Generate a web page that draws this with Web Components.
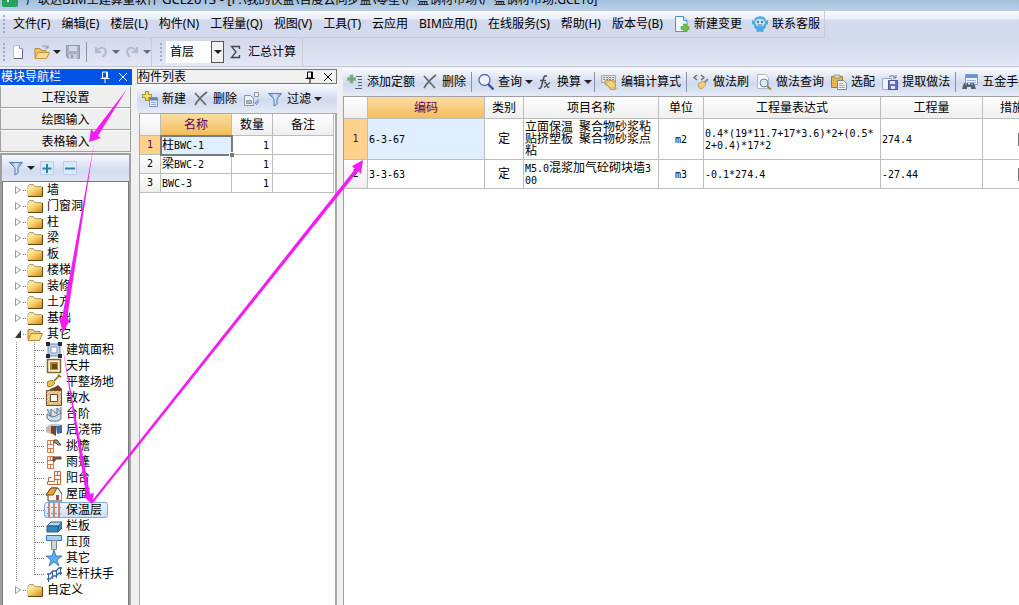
<!DOCTYPE html>
<html lang="zh-CN">
<head>
<meta charset="utf-8">
<title>广联达BIM土建算量软件 GCL2013</title>
<style>
html,body{height:100%;margin:0}
body{overflow:hidden;font:12px/16px "Noto Sans","Noto Sans CJK SC",sans-serif;color:#000;background:#f0f0f0}
</style>
</head>
<body>
<cost-app></cost-app>
<script>
const ICONS={
folder:'<path d="M1 4.5 2.5 2.500h4L8 4.500h6.500v9.500H1z" fill="#f3e2ae" stroke="#b8a06a"/><path d="M1 5h14v9H1z" fill="url(#g)"/><path d="M15.500 5v9.500H1" fill="none" stroke="#5d4715"/><defs><linearGradient id="g" x2="1" y2="1"><stop stop-color="#fff3b8"/><stop offset=".5" stop-color="#f3c860"/><stop offset="1" stop-color="#c98d1c"/></linearGradient></defs>',
open:'<path d="M1 13V3.500h5l1.500 2H13V13z" fill="#f0cf77" stroke="#a8803a"/><path d="m1 14.500 3-7h11.500l-3 7z" fill="#fbdc7e" stroke="#b48a35"/>',
openarrow:'<path d="M1 14V4.500h5l1.500 2H12V14z" fill="#eec069" stroke="#b98a3c"/><path d="m1 14.500 3-6h11.500l-3 6z" fill="#fbdd8f" stroke="#c49747"/><path d="M8 3q3-3 6 1m0-3v3h-3" fill="none" stroke="#7b98ad"/>',
newdoc:'<path d="M2.500 1.500h6l3 3v10h-9z" fill="#fff" stroke="#b4bfd2"/><path d="M8.500 1.500v3h3" fill="#dce6f5" stroke="#8496b3"/><path d="M3 14.500h8.500V5" fill="none" stroke="#5a6a88"/>',
save:'<path d="M1.500 1.500h13v13h-11l-2-2z" fill="#a9b1bf" stroke="#8f98a8"/><path d="M4 2h8v5H4z" fill="#d5dae5"/><path d="M4 10h8v5H4z" fill="#c7cdd9"/><path d="M6 11h2v3H6z" fill="#8f98a8"/>',
undo:'<path d="M3 3v5h5M3.500 7.500Q8 1.500 12 5q2.500 4-2.500 8" fill="none" stroke="#98a3be" stroke-width="2"/>',
redo:'<path d="M13 3v5H8M12.500 7.500Q8 1.500 4 5q-2.500 4 2 8" fill="none" stroke="#98a3be" stroke-width="2"/>',
change:'<path d="M1.500.5h8l3.500 4v11H1.500z" fill="#f3faff" stroke="#4c97c6"/><path d="M9.500.500v4H13" fill="#cfe6f6" stroke="#4c97c6"/><path d="M9.500 8h3v2.500H15v3h-2.500V16h-3v-2.500H7v-3h2.500z" fill="#73c043" stroke="#4d9a2a" stroke-width=".6"/>',
robot:'<path d="M3 2q5-3.500 10 0l1 3 2-1v4l-2 1q0 3-2 4l-1 3H9l-1-1-1 1H5l-1-3q-2-1-2-4L0 8V4l2 1z" fill="#4aaae6"/><ellipse cx="8" cy="6.500" rx="5" ry="3.800" fill="#bfe4f8"/><circle cx="6" cy="6" r=".9" fill="#234a68"/><circle cx="10" cy="6" r=".9" fill="#234a68"/><path d="M6 8.500q2 1.500 4 0" fill="none" stroke="#234a68" stroke-width=".7"/>',
add:'<path d="M7.500 6.500h8v9h-8z" fill="#e3ecf9" stroke="#7d93b8"/><path d="M8 7h7v2.500H8z" fill="#5f87c2"/><path d="M9 11.500h5M9 13.500h5" stroke="#91a9ce"/><path d="M3.500.500h3v3h3v3h-3v3h-3v-3h-3v-3h3z" fill="#f5df62" stroke="#a98f24"/>',
del:'<path d="m2 2 11 12M14 1Q7 6 2 14" fill="none" stroke="#686868" stroke-width="1.700"/>',
copy:'<path d="M.5 4.500h6l3 3v7h-9zM10.500 1.500h4v4h-4z" fill="#edf1f7" stroke="#8d96a6"/><path d="M2.500 9.500h5v3h-5z" fill="#b3bac8" stroke="#8d96a6"/><path d="M14 8v4h-3m2-2-2 2 2 2" fill="none" stroke="#7689c9"/>',
filter:'<path d="M1.500 2.500h13L10 8v5l-3 2V8z" fill="url(#f)" stroke="#527fbc"/><defs><linearGradient id="f"><stop stop-color="#5e91d4"/><stop offset=".5" stop-color="#d6e7fa"/><stop offset="1" stop-color="#6798d4"/></linearGradient></defs>',
plus:'<path d="M1.500 1.500h13v13h-13z" fill="#d9ebfa" stroke="#bfcbed"/><path d="M8 4v9M3.500 8.500h9" stroke="#2b82b6" stroke-width="2"/>',
minus:'<path d="M1.500 1.500h13v13h-13z" fill="#d9ebfa" stroke="#bfcbed"/><path d="M3 8.500h10" stroke="#2b82b6" stroke-width="2"/>',
quota:'<path d="M3 1h3v2.500h2.500v3H6V9H3V6.500H.500v-3H3z" fill="#71ad78" stroke="#8fb898" stroke-width=".7"/><path d="M9 2.500h6M11 5.500h4M11 8.500h4M11 11.500h4M8 14.500h7" stroke="#59626d"/>',
search:'<circle cx="6.500" cy="6" r="5.500" fill="#eef3ff" stroke="#5567a8" stroke-width="1.300"/><path d="m10 10 5.500 5.500" stroke="#3c4c96" stroke-width="2.400"/>',
fx:'<path d="M10 2.500Q7.500.500 6.500 4.500L4.500 12q-1 3.500-3 2M3 6.500h6" fill="none" stroke="#4b5159" stroke-width="1.500"/><path d="m7 9 1.500-.5 2.500 5 1.500-.5M13 8.500 7 13.500" fill="none" stroke="#4b5159" stroke-width="1.300"/>',
editcalc:'<path d="M.5 1.500h14v7h-14z" fill="#e6e6e6" stroke="#a5a5a5"/><path d="M2 3.500h11M2 5.500h11" stroke="#868686" stroke-dasharray="2 1"/><path d="m4 7 3-1 7 1 1 8-5 1-3-4-3-2z" fill="#ebc26c" stroke="#ad8131" stroke-width=".7"/><path d="m7 9 4 4m-2-5 4 4" stroke="#fff0bd"/>',
brush:'<path d="M4 1 1 3.500 4 6M8 1l3 2.500L8 6" fill="none" stroke="#686868" stroke-width="1.300"/><path d="m15 5-4 4" stroke="#8f8a80" stroke-width="2"/><path d="m5 10 5-3 3 3-4 5-3-1z" fill="#f0cf76" stroke="#b58c3b" stroke-width=".7"/>',
docsearch:'<path d="M1.500.500h8l3 3v11h-11z" fill="#fafbff" stroke="#adb9d0"/><circle cx="8" cy="9" r="4" fill="#d9ebf3" stroke="#688399"/><path d="m11 12 4 3.500" stroke="#ad8040" stroke-width="2"/>',
paste:'<path d="M.5 2.500h11v11H.500z" fill="#e3b452" stroke="#a17a27"/><path d="M3 1h6v3H3z" fill="#d8d8d8" stroke="#808080" stroke-width=".7"/><path d="M6.500 6.500h6l3 3v6h-9z" fill="#f8f8fb" stroke="#81818b"/><path d="M8 9.500h4M8 11.500h6M8 13.500h6" stroke="#a1a1ae"/>',
extract:'<path d="M.5 4.500h9v11h-9z" fill="#eef2fb" stroke="#9ba9c7"/><path d="M6.500 6.500h9v9h-9z" fill="#6972bd" stroke="#4b5498"/><path d="M8 7h5v3H8zM9 12h4v3H9z" fill="#e0e5f7"/><path d="M7 3q4-3 7 1m0-3v3h-3" fill="none" stroke="#6c7789"/>',
hardware:'<path d="M3.500.500h12v10h-12z" fill="#eef4fd" stroke="#7f9cc7"/><path d="M4 1h11v3H4z" fill="#6c94cf"/><path d="M5 6.500h9M5 8.500h9" stroke="#9eb2d0"/><path d="M2 9h4v2h2V9h4l2 6H9v-2H5v2H0z" fill="#56606d"/><path d="M3 10h2M9 10h2" stroke="#b9c1cb"/>',
area:'<path d="M2 2h12v12H2z" fill="#bcd2ee" stroke="#7188aa"/><path d="M5 5h6v6H5z" fill="#fff" stroke="#8898b5"/><path d="M0 0h4v4H0zM12 0h4v4h-4zM0 12h4v4H0zM12 12h4v4h-4z" fill="#252b38"/>',
well:'<path d="M1.500 1.500h13v13h-13z" fill="#fff6d8" stroke="#7d643a" stroke-width="1.500"/><path d="M4 4h8v8H4z" fill="#b48319"/><path d="M6 6h5v5H6z" fill="#6a470c"/>',
level:'<path d="m14 1-6 6m4-6 3 2" stroke="#8f6c1a" stroke-width="1.700"/><path d="m1 8 5-2 3 3-3 3-4 1z" fill="#eac43c" stroke="#8c6a16" stroke-width=".8"/><path d="m3 16 3-2 3-1 3-2 4 4v1z" fill="#713e26"/>',
apron:'<path d="M.500.500h15v15H.500z" fill="#dfb77a" stroke="#774b25"/><path d="m1 4 3-3M1 8l3-3m0-1 4-3m0 3 4-3m0 4 3-3m-3 7 3-3m-3 6 3-3m-7 5 4-3m-8 3 4-3m-7 0 3-3" stroke="#f9e8c6"/><path d="M4.500 4.500h7v7h-7z" fill="#fff" stroke="#724b29"/>',
stairs:'<path d="M1 3h4l3 4V2h5l2-1v13l-3 1H3l-2-3z" fill="#cfdeeb"/><path d="m1 3 4 7V3l6 5V2l4 5V1M1 8v4l3 3h8l3-2V7l-5 3-4 1z" fill="none" stroke="#66758a"/>',
pour:'<path d="m0 5 6-2h4v8l-5 1-5-2z" fill="#c9b4aa"/><path d="m5 3 5 1v10l-5-3z" fill="#744630"/><path d="m10 4 6-1v8l-5 1z" fill="#3c6cae"/><path d="m0 4 5-2h11l-5 2z" fill="#b7cee6"/>',
eave:'<path d="M1.500 2.500h6v12h-6zM1 6.500h6M1 10.500h6M4.500 3v3M4.500 11v3" fill="#fff" stroke="#d9774c"/><path d="M8 2h3l4 5h-3l-2-2H8z" fill="#a59a90" stroke="#534b43"/>',
canopy:'<path d="M1.500 2.500h6v12h-6zM1 6.500h6M1 10.500h6M4.500 3v3M4.500 11v3" fill="#fff" stroke="#d9774c"/><path d="M7 3h8v2H9v2H7z" fill="#a86037" stroke="#55392c"/>',
balcony:'<path d="M8.500 1.500h6v13h-13v-3h7z" fill="#fff4ea" stroke="#c9683f"/><path d="M9 5.500h5M9 9.500h5M11.500 2v3M11.500 10v4M2.500 11V7.500h3" fill="none" stroke="#c9683f"/>',
roof:'<path d="m0 9 5-7h7l4 6v7H2V9z" fill="#f5f5f5" stroke="#424242"/><path d="m0 9 5-7h6L7 9z" fill="#eba333" stroke="#7c531c"/><path d="M10 9h3v5h-3z" fill="#99563c"/>',
insul:'<path d="M3 1v15M8 1v15M13 1v15" stroke="#c45c3c" stroke-width="1.400"/><path d="M1 5.500h14M1 11.500h14" stroke="#a6958d" stroke-dasharray="2 2"/>',
rail:'<path d="m1 8 4-4h11l-4 4z" fill="#b5daf4" stroke="#285c8c"/><path d="M1 8h11v6H1zM12 8l4-4v6l-4 4z" fill="#3a84bb" stroke="#285c8c"/>',
coping:'<path d="M.5 1.500h15v5H.500z" fill="#a4d2f7" stroke="#3475b5"/><path d="M5.500 6.500h5v9h-5z" fill="#d6d6d6" stroke="#888"/>',
star:'<path d="m8 0 2 6h6l-5 4 2 6-5-4-5 4 2-6-5-4h6z" fill="#5caeee" stroke="#2869b2" stroke-width=".8"/>',
handrail:'<path d="M1 8h3l3-3h3l3-3h3M1 13h3l3-3h3l3-3h3" fill="none" stroke="#3263ab" stroke-width="1.300"/><path d="M2.500 8v8M6.500 5v8M10.500 4v8M14.500 1v8" stroke="#3263ab"/>',
sigma:'<path d="M11.500 5V2.500h-8L8 8l-4.500 5.500h8V11" fill="none" stroke="#444" stroke-width="1.300"/>',
pin:'<path d="M5.500 3v6h5V3zM9.500 3v6M3.500 9.500h9M8 10v4" fill="none" stroke="currentColor"/>',
close:'<path d="m4 4 8 8m0-8-8 8" fill="none" stroke="currentColor"/>',
app:'<path d="M0 0h16v14q0 2-2 2H2q-2 0-2-2z" fill="#25a35b"/><path d="M5 5h6v2H7v4H5z" fill="#fff"/>'
};
const define=(name,css,html)=>customElements.define(name,class extends HTMLElement{
  constructor(){super();this.attachShadow({mode:'open'})}
  connectedCallback(){this.shadowRoot.innerHTML=`<style>*{box-sizing:border-box}button{font:inherit;color:inherit;border:0;background:none;padding:0;margin:0}${css}</style>`+(typeof html==='function'?html(this):html)}
});
define('ui-icon',':host{display:block;width:16px;height:16px;flex:none}svg{display:block}',
  e=>`<svg width="16" height="16" viewBox="0 0 16 16" aria-hidden="true">${ICONS[e.getAttribute('name')]}</svg>`);
define('ui-caret',':host{display:block;flex:none;width:0;border:4px solid transparent;border-top-color:#222;border-bottom:0}','');
define('tool-button',':host{display:block;flex:none}button{display:flex;align-items:center;gap:4px;padding:0 3px 0 4px;height:24px;white-space:nowrap}button.m{padding-right:0}ui-caret{margin-left:-1px}',
  e=>`<button class="${e.hasAttribute('menu')?'m':''}" aria-label="${e.getAttribute('label')||e.textContent}"><ui-icon name="${e.getAttribute('icon')}"></ui-icon><slot></slot>${e.hasAttribute('menu')?'<ui-caret></ui-caret>':''}</button>`);
define('tool-sep',':host{display:block;flex:none;width:1px;height:20px;margin:0 2px;background:#8c93a8}','');
define('tool-grip',':host{display:block;flex:none;width:2px;height:18px;background:repeating-linear-gradient(#a3abbd 0 2px,transparent 2px 4px)}','');

define('title-bar',':host{display:flex;height:11px;overflow:hidden;background:linear-gradient(#a5c0db,#b7d0ea);align-items:flex-end;gap:8px;padding-left:2px}ui-icon{margin-bottom:4px}span{font-size:13px;line-height:16px;height:16px;margin-bottom:4px;white-space:nowrap}b{font-weight:400;font-size:12px}',
 '<ui-icon name="app"></ui-icon><span><b>广联达</b>BIM<b>土建算量软件</b> GCL2013 - [F:\\<b>我的快盘</b>\\<b>百度云同步盘</b>\\<b>零星</b>\\<b>广盛钢材市场</b>\\<b>广盛钢材市场.GCL10]</b></span>');

define('menu-bar',':host{display:flex;height:27px;background:linear-gradient(#fbfcfe,#e9edf7 8px,#d4daee 9px)}nav{display:flex;align-items:center;gap:11px;padding:0 5px 0 3px;border-right:1px solid #c9cad2;border-bottom:1px solid #c9cad2}button{white-space:nowrap}tool-grip{margin-right:-3px}tool-button{margin:0 -4px}',
 '<nav><tool-grip></tool-grip>'+'文件(F),编辑(E),楼层(L),构件(N),工程量(Q),视图(V),工具(T),云应用,BIM应用(I),在线服务(S),帮助(H),版本号(B)'.split(',').map(t=>`<button>${t}</button>`).join('')+'<tool-button icon="change">新建变更</tool-button><tool-button icon="robot">联系客服</tool-button></nav>');

define('main-toolbar',':host{display:flex;height:28px;background:linear-gradient(#d2d8eb,#e3e7f6)}.g{display:flex;align-items:center;padding:0 0 0 3px;border-right:1px solid #c9cad2}tool-grip{margin-right:4px}.first tool-grip{margin-right:2px}.g.second{padding:0 3px 0 8px}.pick{position:relative;display:flex;width:58px;height:22px}select{appearance:none;width:100%;border:0;border-radius:0;background:#fff;font:inherit;padding:0 0 0 4px;color:#000}.drop{position:absolute;right:0;top:0;width:13px;height:22px;border:1px solid #555;background:#f2f2f2;pointer-events:none;display:grid;place-items:center}.off{opacity:.6}',
 `<div class="g first"><tool-grip></tool-grip><tool-button icon="newdoc" label="新建"></tool-button><tool-button icon="openarrow" label="打开" menu></tool-button><tool-button icon="save" label="保存"></tool-button><tool-sep></tool-sep><tool-button class="off" icon="undo" label="撤销" menu></tool-button><tool-button class="off" icon="redo" label="恢复" menu></tool-button></div>
 <div class="g second"><tool-grip></tool-grip><div class="pick"><select aria-label="楼层"><option>首层</option></select><span class="drop"><ui-caret></ui-caret></span></div><tool-button icon="sigma">汇总计算</tool-button></div>`);

define('panel-title',':host{display:flex;align-items:center;height:15px;overflow:hidden;border:1px solid #777;white-space:nowrap;line-height:14px}:host([active]){background:#0054e3;color:#fff;border-color:#0054e3}span{flex:1}button{margin-left:2px}',
 '<span><slot></slot></span><button aria-label="固定"><ui-icon name="pin"></ui-icon></button><button aria-label="关闭"><ui-icon name="close"></ui-icon></button>');

define('tree-item',`:host{display:flex;align-items:center;height:16px;white-space:nowrap;padding-left:11px}
 .tw{width:9px;height:10px;flex:none}.dots{width:3px;flex:none;border-top:1px dotted #777}.t{margin-left:5px;padding-right:3px}
 :host([child]){padding-left:31px}:host([child]) .dots{width:10px}:host([child]) .tw{display:none}
 .box{display:flex;align-items:center;height:16px;padding-left:1px}
 :host([child]) .box{padding:0 3px 0 2px}:host([selected]) .box{background:linear-gradient(#eef6fe,#c9dff6);outline:1px solid #7da7d8;outline-offset:-1px;border-radius:3px}
 ui-icon{margin-right:-1px}`,
 e=>`<svg class="tw" viewBox="1 0 9 10" aria-hidden="true">${e.hasAttribute('child')?'':e.hasAttribute('open')?'<path d="M8 1v8H2z" fill="#333"/>':'<path d="M2.500 1.500v7l5-3.500z" fill="#fff" stroke="#999"/>'}</svg><i class="dots"></i><span class="box"><ui-icon name="${e.getAttribute('icon')||'folder'}"></ui-icon><span class="t"><slot></slot></span></span>`);

const kids=[['area','建筑面积'],['well','天井'],['level','平整场地'],['apron','散水'],['stairs','台阶'],['pour','后浇带'],['eave','挑檐'],['canopy','雨篷'],['balcony','阳台'],['roof','屋面'],['insul','保温层'],['rail','栏板'],['coping','压顶'],['star','其它'],['handrail','栏杆扶手']];
define('nav-panel',`:host{display:flex;flex-direction:column;width:132px;flex:none;min-height:0}panel-title{height:16px;margin-bottom:1px}
 .tab{height:22px;flex:none;border:1px solid #a0a0a0;border-top-color:#fff;background:#efefef;width:131px;padding-top:2px}
 .frame{flex:1;min-height:0;display:flex;flex-direction:column;margin-top:1px;border:2px solid #a0a0a0;border-bottom:0;width:131px}
 .bar{display:flex;align-items:center;height:26px;flex:none;background:linear-gradient(#f5f8fd,#d3dcf0 60%,#dde5f5);padding-left:2px}
 .tree{flex:1;min-height:0;overflow:hidden;background:#fff;border:1px solid #777;border-bottom:0}
 .kids{background:repeating-linear-gradient(#888 0 1px,transparent 1px 2px) 13px 0/1px 100% no-repeat,repeating-linear-gradient(#888 0 1px,transparent 1px 2px) 31px 0/1px calc(100% - 8px) no-repeat}`,
 `<panel-title active>模块导航栏</panel-title><button class="tab">工程设置</button><button class="tab">绘图输入</button><button class="tab">表格输入</button>
 <div class="frame"><div class="bar"><tool-button icon="filter" label="过滤" menu></tool-button><tool-button icon="plus" label="展开"></tool-button><tool-button icon="minus" label="折叠"></tool-button></div>
 <div class="tree" role="tree">${'墙,门窗洞,柱,梁,板,楼梯,装修,土方,基础'.split(',').map(t=>`<tree-item role="treeitem">${t}</tree-item>`).join('')}<tree-item role="treeitem" icon="open" open>其它</tree-item><div class="kids" role="group">${kids.map(k=>`<tree-item role="treeitem" child icon="${k[0]}" ${k[0]==='insul'?'selected':''}>${k[1]}</tree-item>`).join('')}</div><tree-item role="treeitem">自定义</tree-item></div></div>`);

const grid=`table{border-collapse:separate;border-spacing:0;table-layout:fixed;line-height:12px}
 th,td{border:solid #bdbdbd;border-width:0 1px 1px 0;padding:0 1px;font-weight:400;text-align:left;word-break:break-all;overflow:hidden;background:#fff}
 thead th,tbody th{background:linear-gradient(#fff,#eee);text-align:center;padding:0}
 thead th.on{background:linear-gradient(#fbdca4,#f3bd5c);color:#5b005b}tbody th.on{background:#ffd28c;color:#5b005b}
 code,tbody th{font-family:"DejaVu Sans Mono",monospace;font-size:10px}code{line-height:1px}.c{text-align:center}.r{text-align:right;padding-right:3px}.sel{background:#dfefff}`;
define('component-list',`:host{display:flex;flex-direction:column;width:200px;flex:none;min-height:0}
 .bar{display:flex;align-items:center;height:29px;flex:none;background:linear-gradient(#fafbfe,#d0daee 55%,#e5ebf7);padding-left:1px}
 .body{flex:1;min-height:0;background:#fff;border:1px solid #a9a9a9;border-width:1px 2px 0 1px;margin-left:2px;overflow:hidden}${grid}
 thead th{height:22px}tbody td{height:19px}td.sel{position:relative;overflow:visible;outline:2px solid #7b7b7b;outline-offset:-1px}td.sel::after{content:"";position:absolute;right:-3px;bottom:-3px;width:4px;height:4px;background:#7b7b7b;border:solid #fff;border-width:1px 0 0 1px}`,
 `<panel-title>构件列表</panel-title><div class="bar"><tool-button icon="add">新建</tool-button><tool-button icon="del">删除</tool-button><tool-button icon="copy" label="复制"></tool-button><tool-button icon="filter" menu>过滤</tool-button></div>
 <div class="body"><table style="width:194px"><colgroup><col style="width:21px"><col style="width:71px"><col style="width:41px"><col style="width:61px"></colgroup><thead><tr><th></th><th class="on">名称</th><th>数量</th><th>备注</th></tr></thead><tbody>
 <tr><th class="on">1</th><td class="sel">柱<code>BWC-1</code></td><td class="r"><code>1</code></td><td></td></tr>
 <tr><th>2</th><td>梁<code>BWC-2</code></td><td class="r"><code>1</code></td><td></td></tr>
 <tr><th>3</th><td><code>BWC-3</code></td><td class="r"><code>1</code></td><td></td></tr></tbody></table></div>`);

define('quota-panel',`:host{display:flex;flex-direction:column;flex:1;min-width:0;min-height:0;overflow:hidden}
 .bar{display:flex;align-items:center;height:28px;flex:none;background:linear-gradient(#fafbfe,#d0daee 55%,#e5ebf7);overflow:hidden}
 .body{flex:1;min-height:0;background:#fff;border:1px solid #a0a0a0;border-width:1px 0 0 1px;overflow:hidden}${grid}
 thead th{height:22px}input{appearance:none;display:block;margin:0 auto;width:13px;height:13px;border:1px solid #777;background:#fff}`,
 `<div class="bar"><tool-button icon="quota">添加定额</tool-button><tool-button icon="del">删除</tool-button><tool-sep></tool-sep><tool-button icon="search" menu>查询</tool-button><tool-button icon="fx" menu>换算</tool-button><tool-sep></tool-sep><tool-button icon="editcalc">编辑计算式</tool-button><tool-sep></tool-sep><tool-button icon="brush">做法刷</tool-button><tool-button icon="docsearch">做法查询</tool-button><tool-button icon="paste">选配</tool-button><tool-button icon="extract">提取做法</tool-button><tool-sep></tool-sep><tool-button icon="hardware">五金手册</tool-button></div>
 <div class="body"><table style="width:722px"><colgroup>${[24,117,39,135,45,177,102,83].map(w=>`<col style="width:${w}px">`).join('')}</colgroup><thead><tr><th></th><th class="on">编码</th><th>类别</th><th>项目名称</th><th>单位</th><th>工程量表达式</th><th>工程量</th><th>措施项目</th></tr></thead><tbody>
 <tr style="height:41px"><th class="on">1</th><td class="sel"><code>6-3-67</code></td><td class="c">定</td><td>立面保温<code> </code>聚合物砂浆粘贴挤塑板<code> </code>聚合物砂浆点粘</td><td class="c"><code>m2</code></td><td><code>0.4*(19*11.7+17*3.6)*2+(0.5*2+0.4)*17*2</code></td><td><code>274.4</code></td><td><input type="checkbox" aria-label="措施项目 1"></td></tr>
 <tr style="height:29px"><th>2</th><td><code>3-3-63</code></td><td class="c">定</td><td><code>M5.0</code>混浆加气砼砌块墙<code>300</code></td><td class="c"><code>m3</code></td><td><code>-0.1*274.4</code></td><td><code>-27.44</code></td><td><input type="checkbox" aria-label="措施项目 2"></td></tr></tbody></table></div>`);

define('arrow-notes',':host{position:absolute;inset:0;pointer-events:none}svg{width:100%;height:100%;display:block}',
 `<svg aria-hidden="true" fill="#f41cf4"><path d="M127 89 98 136 101 138 89 142 91 129 94 132z"/><path d="M94 144 67 319 70 320 63 333 59 318 62 318z"/><path d="M62 344 90 494 94 493 92 504 83 496 86 495z"/><path d="M93 503 358 171 361 174 363 160 352 166 355 169 91 502z"/></svg>`);

define('cost-app',':host{display:flex;flex-direction:column;height:100vh;position:relative;overflow:hidden;background:#f0f0f0}main{flex:1;display:flex;min-height:0;border-top:1px solid #c5c9d6;padding-top:1px}nav-panel,component-list{padding-top:1px}component-list{margin:0 6px 0 5px}',
 '<title-bar></title-bar><menu-bar></menu-bar><main-toolbar></main-toolbar><main><nav-panel></nav-panel><component-list></component-list><quota-panel></quota-panel></main><arrow-notes></arrow-notes>');
</script>
</body>
</html>
